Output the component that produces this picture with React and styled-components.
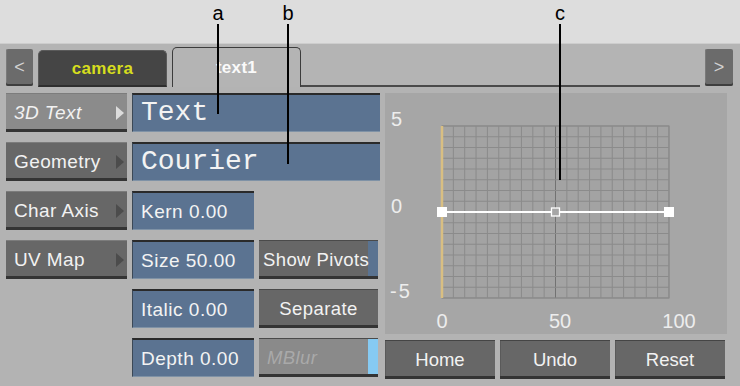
import React from 'react'
import styled, { createGlobalStyle } from 'styled-components'

const Global = createGlobalStyle`
  html, body {
    margin: 0;
    padding: 0;
    background: #b3b3b3;
  }
  * { box-sizing: border-box; }
`

const Page = styled.div`
  position: relative;
  width: 740px;
  height: 386px;
  overflow: hidden;
  background: #b3b3b3;
  font-family: "Liberation Sans", Arial, sans-serif;
`

const Header = styled.div`
  height: 44px;
  background: #dddddd;
  border-bottom: 1px solid #cdcdcd;
`

const TabBar = styled.div`
  height: 43px;
  display: flex;
  align-items: flex-end;
  gap: 5px;
  padding: 0 7px 0 6px;
  background: #b4b4b4;
`

const NavButton = styled.div`
  width: ${p => p.w}px;
  height: 37px;
  margin-bottom: 1px;
  display: flex;
  align-items: center;
  justify-content: center;
  background: #6b6b6b;
  border-radius: 2px;
  box-shadow: inset 0 -2px 0 #3e3e3e, inset 1px 0 0 #7a7a7a;
  color: #d2d2d2;
  font-size: 18px;
`

const Tab = styled.div`
  width: 129px;
  height: ${p => (p.active ? 40 : 37)}px;
  display: flex;
  align-items: center;
  justify-content: center;
  padding-top: ${p => (p.active ? 0 : 1)}px;
  background: ${p => (p.active ? '#b4b4b4' : '#454545')};
  border: 1px solid ${p => (p.active ? '#3c3c3c' : '#5a5a5a')};
  border-bottom: ${p => (p.active ? 'none' : '2px solid #2e2e2e')};
  border-radius: 5px 5px 0 0;
  color: ${p => (p.active ? '#fafafa' : '#d6dd1e')};
  font-size: 17px;
  font-weight: bold;
  letter-spacing: 0.3px;
`

const TabLine = styled.div`
  flex: 1;
  align-self: stretch;
  margin-left: -5px;
  border-bottom: 2px solid #4a4a4a;
`

const Body = styled.div`
  display: grid;
  grid-template-columns: 121px 248px 342px;
  column-gap: 5px;
  padding: 6px 0 0 6px;
`

const Menu = styled.div`
  display: grid;
  grid-auto-rows: 39px;
  row-gap: 10px;
  align-content: start;
`

const MenuButton = styled.div`
  display: flex;
  align-items: center;
  justify-content: space-between;
  padding: 1px 3px 0 8px;
  background: ${p => (p.selected ? '#8b8b8b' : '#676767')};
  box-shadow: inset 0 -3px 0 #343434, inset 0 1px 0 #7c7c7c;
  color: #f2f2f2;
  font-size: 19px;
  letter-spacing: 0.4px;
  font-style: ${p => (p.selected ? 'italic' : 'normal')};
`

const Arrow = styled.span`
  width: 0;
  height: 0;
  border-top: 7px solid transparent;
  border-bottom: 7px solid transparent;
  border-left: 8px solid ${p => (p.selected ? '#dcdcdc' : '#4c4c4c')};
`

const Fields = styled.div`
  display: grid;
  grid-template-columns: 122px 121px;
  column-gap: 5px;
  grid-auto-rows: 39px;
  row-gap: 10px;
  align-content: start;
`

const Field = styled.div`
  grid-column: ${p => (p.wide ? '1 / -1' : 'auto')};
  display: flex;
  align-items: center;
  padding: ${p => (p.mono ? '0 0 1px 8px' : '1px 0 0 8px')};
  background: #5b7391;
  border-top: 2px solid #2a2a2a;
  border-left: 1px solid #3b4856;
  border-bottom: 1px solid #7f92a6;
  color: #f3f3f3;
  font-family: ${p => (p.mono ? '"Liberation Mono", "Courier New", monospace' : 'inherit')};
  font-size: ${p => (p.mono ? 28 : 19)}px;
  letter-spacing: ${p => (p.mono ? 0 : 0.5)}px;
`

const Toggle = styled.div`
  grid-column: 2;
  margin-right: 2px;
  display: flex;
  align-items: center;
  justify-content: ${p => (p.center ? 'center' : 'flex-start')};
  padding: 1px ${p => (p.center ? 0 : 10)}px 0 ${p => (p.center ? 0 : p.muted ? 8 : 4)}px;
  background: ${p => (p.muted ? '#8a8a8a' : '#676767')};
  box-shadow: inset 0 -3px 0 #343434, inset 0 1px 0 #4a4a4a
    ${p => (p.strip ? `, inset -10px 0 0 ${p.strip}` : '')};
  color: ${p => (p.muted ? '#a9a9a9' : '#f2f2f2')};
  font-size: 18.5px;
  font-style: ${p => (p.muted ? 'italic' : 'normal')};
  letter-spacing: 0.4px;
  white-space: nowrap;
`

const Side = styled.div`
  display: flex;
  flex-direction: column;
  gap: 6px;
`

const GraphPanel = styled.div`
  height: 241px;
  background: #a6a6a6;
`

const ButtonRow = styled.div`
  display: grid;
  grid-template-columns: repeat(3, 110px);
  column-gap: 5px;
  height: 39px;
`

const ActionButton = styled.div`
  display: flex;
  align-items: center;
  justify-content: center;
  padding-top: 1px;
  background: #676767;
  box-shadow: inset 0 -3px 0 #343434, inset 0 1px 0 #454545, inset 1px 0 0 #5a5a5a;
  color: #f2f2f2;
  font-size: 18.5px;
`

const Callout = styled.div`
  position: absolute;
  left: ${p => p.x - 10}px;
  top: 2px;
  width: 20px;
  display: flex;
  flex-direction: column;
  align-items: center;
  pointer-events: none;
`

const CalloutLabel = styled.span`
  font-family: "Liberation Sans", Arial, sans-serif;
  font-size: 20px;
  line-height: 22px;
  color: #000;
`

const CalloutLine = styled.span`
  width: 2px;
  height: ${p => p.len}px;
  background: #000;
`

const Graph = () => {
  const gx = 57
  const gy = 33
  const gw = 227
  const gh = 172
  const cols = 20
  const rows = 16
  const vlines = Array.from({ length: cols + 1 }, (_, i) => gx + (gw / cols) * i)
  const hlines = Array.from({ length: rows + 1 }, (_, i) => gy + (gh / rows) * i)
  const mid = gx + gw / 2
  const zero = gy + gh / 2

  return (
    <svg width="342" height="241" viewBox="0 0 342 241">
      <rect x={gx} y={gy} width={gw} height={gh} fill="#a3a3a3" stroke="#858585" />
      {vlines.map((x, i) => (
        <line key={'v' + i} x1={x} y1={gy} x2={x} y2={gy + gh} stroke={i === cols / 2 ? '#727272' : '#8b8b8b'} strokeWidth="1" />
      ))}
      {hlines.map((y, i) => (
        <line key={'h' + i} x1={gx} y1={y} x2={gx + gw} y2={y} stroke="#8b8b8b" strokeWidth="1" />
      ))}
      <line x1={gx} y1={gy} x2={gx} y2={gy + gh} stroke="#d9bf82" strokeWidth="2.5" />
      <line x1={gx} y1={zero} x2={gx + gw} y2={zero} stroke="#ffffff" strokeWidth="2" />
      <rect x={gx - 5} y={zero - 5} width="10" height="10" fill="#ffffff" />
      <rect x={gx + gw - 5} y={zero - 5} width="10" height="10" fill="#ffffff" />
      <rect x={mid - 4} y={zero - 4} width="8" height="8" fill="#a6a6a6" stroke="#ffffff" strokeWidth="1.3" />
      <g fill="#ededed" fontFamily="Liberation Sans, Arial, sans-serif" fontSize="20">
        <text x="6" y="33">5</text>
        <text x="6" y="120">0</text>
        <text x="5" y="205" letterSpacing="2">-5</text>
        <text x={gx} y="235" textAnchor="middle">0</text>
        <text x="175" y="235" textAnchor="middle">50</text>
        <text x="294" y="235" textAnchor="middle">100</text>
      </g>
    </svg>
  )
}

const menu = [
  { label: '3D Text', selected: true },
  { label: 'Geometry' },
  { label: 'Char Axis' },
  { label: 'UV Map' },
]

export default function App() {
  return (
    <Page>
      <Global />
      <Header />
      <TabBar>
        <NavButton w={27}>&lt;</NavButton>
        <Tab>camera</Tab>
        <Tab active>text1</Tab>
        <TabLine />
        <NavButton w={28}>&gt;</NavButton>
      </TabBar>
      <Body>
        <Menu>
          {menu.map(m => (
            <MenuButton key={m.label} selected={m.selected}>
              <span>{m.label}</span>
              <Arrow selected={m.selected} />
            </MenuButton>
          ))}
        </Menu>
        <Fields>
          <Field wide mono>Text</Field>
          <Field wide mono>Courier</Field>
          <Field>Kern 0.00</Field>
          <span />
          <Field>Size 50.00</Field>
          <Toggle strip="#5a7391">Show Pivots</Toggle>
          <Field>Italic 0.00</Field>
          <Toggle center>Separate</Toggle>
          <Field>Depth 0.00</Field>
          <Toggle muted strip="#86caf2">MBlur</Toggle>
        </Fields>
        <Side>
          <GraphPanel>
            <Graph />
          </GraphPanel>
          <ButtonRow>
            <ActionButton>Home</ActionButton>
            <ActionButton>Undo</ActionButton>
            <ActionButton>Reset</ActionButton>
          </ButtonRow>
        </Side>
      </Body>
      <Callout x={218}>
        <CalloutLabel>a</CalloutLabel>
        <CalloutLine len={90} />
      </Callout>
      <Callout x={288}>
        <CalloutLabel>b</CalloutLabel>
        <CalloutLine len={140} />
      </Callout>
      <Callout x={560}>
        <CalloutLabel>c</CalloutLabel>
        <CalloutLine len={156} />
      </Callout>
    </Page>
  )
}
